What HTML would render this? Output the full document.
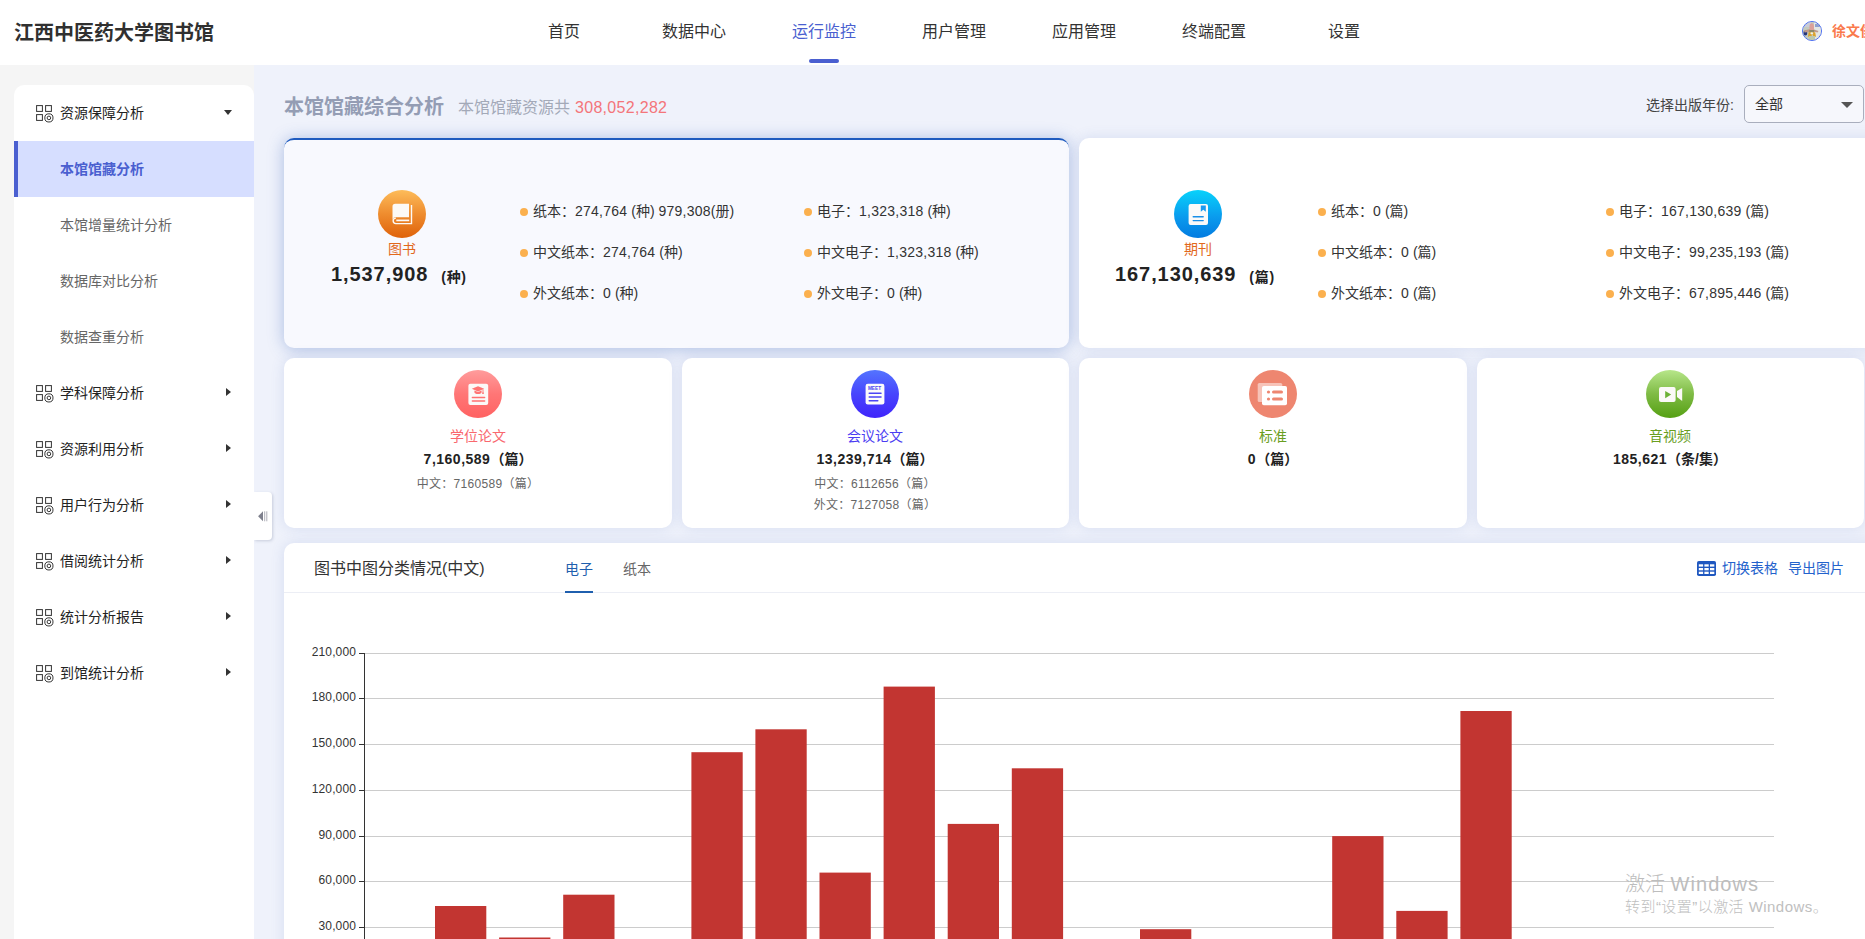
<!DOCTYPE html>
<html lang="zh-CN">
<head>
<meta charset="utf-8">
<title>江西中医药大学图书馆</title>
<style>
*{box-sizing:border-box;margin:0;padding:0}
html,body{width:1865px;height:939px;overflow:hidden;background:#eff2fb}
body{font-family:"Liberation Sans","Noto Sans CJK SC",sans-serif;font-size:14px;color:#333;position:relative}
.abs{position:absolute}
#hdr{position:absolute;left:0;top:0;width:1865px;height:65px;background:#fff}
#logo{position:absolute;left:14px;top:18px;font-size:20px;font-weight:bold;color:#303030;line-height:30px;white-space:nowrap}
.nav{position:absolute;top:17px;width:130px;text-align:center;font-size:16px;line-height:30px;color:#333;white-space:nowrap}
.nav.on{color:#4a5fd0}
#navbar{position:absolute;left:809px;top:59px;width:30px;height:4px;border-radius:2px;background:#4a5fd0}
#avatar{position:absolute;left:1802px;top:21px;width:20px;height:20px;border-radius:50%;border:1px solid #4a6df5;overflow:hidden;background:#c5cbc2}
#uname{position:absolute;left:1832px;top:19px;font-size:14px;font-weight:bold;color:#fa7a4c;line-height:24px;white-space:nowrap}
#sidebg{position:absolute;left:0;top:65px;width:254px;height:874px;background:#f5f5f5}
#side{position:absolute;left:14px;top:85px;width:240px;height:900px;background:#fff;border-radius:10px 10px 0 0}
.mi{position:absolute;left:0;width:240px;height:56px;line-height:56px;font-size:14px;color:#222;white-space:nowrap}
.mi .t{position:absolute;left:46px;top:0}
.mi svg.ic{position:absolute;left:22px;top:19.500px}
.mi .ar{position:absolute;left:212px;top:23px;width:0;height:0;border-left:5px solid #333;border-top:4.5px solid transparent;border-bottom:4.5px solid transparent}
.mi .ad{position:absolute;left:209.500px;top:25px;width:0;height:0;border-top:5px solid #333;border-left:4.5px solid transparent;border-right:4.5px solid transparent}
.sub{color:#666}
.sub .t{left:46px}
.mi.act{background:#d6deff;border-left:4px solid #4a5fd0;color:#4a5fd0;font-weight:bold}
.mi.act .t{left:42px}
#handle{position:absolute;left:254px;top:491.500px;width:18px;height:48.500px;background:#fff;border-radius:0 4px 4px 0;box-shadow:1px 1px 3px rgba(110,120,150,.3);clip-path:inset(-6px -6px -6px 0)}

#ttl{position:absolute;left:284px;top:92px;font-size:20px;font-weight:bold;color:#949db4;line-height:30px;white-space:nowrap}
#sub{position:absolute;left:458px;top:95px;font-size:16px;color:#a3a9b8;line-height:26px;white-space:nowrap}
#sub b{font-weight:normal;color:#f4757a;margin-left:5px;letter-spacing:.3px}
#sellab{position:absolute;left:1646px;top:93px;font-size:14px;color:#444;line-height:24px;white-space:nowrap}
#sel{position:absolute;left:1744px;top:85px;width:120px;height:38px;border:1px solid #a9aebd;border-radius:5px;background:#f6f7fc;font-size:14px;line-height:36px;padding-left:10px;color:#333}
#sel i{position:absolute;left:96px;top:16px;width:0;height:0;border-top:6px solid #555;border-left:6px solid transparent;border-right:6px solid transparent}
.big{position:absolute;top:138px;width:785px;height:210px;border-radius:10px;background:#fff;box-shadow:0 0 14px rgba(70,100,180,.15)}
.big.on{background:#f8f9fe;border-top:2px solid #1f5bbf;box-shadow:0 1px 16px rgba(50,95,185,.36)}
.circ{position:absolute;width:48px;height:48px;border-radius:50%}
.lab{position:absolute;font-size:14px;line-height:20px;text-align:center;white-space:nowrap}
.num{position:absolute;font-weight:bold;color:#222;white-space:nowrap;text-align:center}
.row{position:absolute;font-size:14px;line-height:20px;color:#333;white-space:nowrap;padding-left:13px}
.row:before{content:"";position:absolute;left:0;top:7px;width:8px;height:8px;border-radius:50%;background:#fbb04e}
.sm{position:absolute;top:358px;width:387.5px;height:170px;border-radius:10px;background:#fff;box-shadow:0 0 14px rgba(70,100,180,.15)}
.sm .circ{left:170px;top:12px}
.sm .lab{left:0;width:388px;top:68px}
.sm .num{left:0;width:388px;top:90px;font-size:14px;line-height:22px}
.sm .d{position:absolute;left:0;width:388px;font-size:12px;line-height:18px;color:#666;text-align:center;white-space:nowrap;letter-spacing:.3px}
#chart{position:absolute;left:284px;top:543px;width:1600px;height:420px;background:#fff;border-radius:10px 0 0 0;box-shadow:0 0 14px rgba(70,100,180,.15)}
#chd{position:absolute;left:0;top:0;width:1581px;height:50px;border-bottom:1px solid #eceef5}
#cht{position:absolute;left:30px;top:13px;font-size:16px;line-height:26px;color:#333;white-space:nowrap}
.tab{position:absolute;top:14px;font-size:14px;line-height:24px;white-space:nowrap;color:#666}
.tab.on{color:#1f5fae}
#tabbar{position:absolute;left:281px;top:48px;width:28px;height:2px;background:#1f5fae}
.lnk{position:absolute;top:13px;font-size:14px;line-height:24px;color:#2462cc;white-space:nowrap}
#wm1{position:absolute;left:1625px;top:870px;font-size:20px;line-height:28px;color:#bdbdbd;white-space:nowrap;font-weight:300}
#wm2{position:absolute;left:1625px;top:896px;font-size:15px;line-height:22px;color:#c0c0c0;white-space:nowrap;font-weight:300;letter-spacing:.45px}
.n{letter-spacing:.25px}
.big .nn{letter-spacing:.92px}
.sm .nn{letter-spacing:.5px}
.big>*{margin-top:1px}
.nu{position:relative;top:1px;letter-spacing:.7px}
</style>
</head>
<body>
<div id="hdr">
  <div id="logo">江西中医药大学图书馆</div>
  <div class="nav" style="left:499px">首页</div>
  <div class="nav" style="left:629px">数据中心</div>
  <div class="nav on" style="left:759px">运行监控</div>
  <div class="nav" style="left:889px">用户管理</div>
  <div class="nav" style="left:1019px">应用管理</div>
  <div class="nav" style="left:1149px">终端配置</div>
  <div class="nav" style="left:1279px">设置</div>
  <div id="navbar"></div>
  <div id="avatar"><svg width="18" height="18" viewBox="0 0 18 18"><defs><filter id="bl" x="-20%" y="-20%" width="140%" height="140%"><feGaussianBlur stdDeviation=".7"/></filter></defs><g filter="url(#bl)"><rect width="18" height="18" fill="#c3cabf"/><rect x="11" y="0" width="7" height="18" fill="#e4e7e4"/><rect x="0" y="0" width="8" height="5" fill="#c8cbd8"/><rect x="12" y="2" width="5" height="3" fill="#8fa0d0"/><ellipse cx="2.300" cy="11" rx="2" ry="2.600" fill="#26357c"/><path d="M1 8.500L7 7l4 .5 4.500 1.500-1 1.500-4-1-4 .5-5 .5z" fill="#c09a8c"/><ellipse cx="8.700" cy="5.500" rx="2.300" ry="4.200" fill="#dba09a"/><rect x="6.300" y="8" width="5" height="2.400" fill="#8c8a6a"/><path d="M5.600 10.200h6.600l.8 4.500h-2.600l-1-3-1.200 3H5z" fill="#dda32c"/><ellipse cx="8.800" cy="11.300" rx="1.400" ry="1.100" fill="#eef3ea"/><rect x="6" y="14" width="6" height="4" fill="#bcc8ae"/></g></svg></div>
  <div id="uname">徐文俊</div>
</div>
<div id="sidebg"></div>
<div id="side">
<div class="mi" style="top:0px"><svg class="ic" width="18" height="18" viewBox="0 0 18 18" fill="none" stroke="#333" stroke-width="1"><rect x="0.6" y="0.6" width="5.8" height="5.8"/><rect x="9.6" y="0.6" width="5.8" height="5.8"/><rect x="0.6" y="9.6" width="5.8" height="5.8"/><circle cx="12.9" cy="12.9" r="4.1"/><circle cx="12.9" cy="12.9" r="1.8"/></svg><span class="t">资源保障分析</span><i class="ad"></i></div>
<div class="mi act" style="top:56px"><span class="t">本馆馆藏分析</span></div>
<div class="mi sub" style="top:112px"><span class="t">本馆增量统计分析</span></div>
<div class="mi sub" style="top:168px"><span class="t">数据库对比分析</span></div>
<div class="mi sub" style="top:224px"><span class="t">数据查重分析</span></div>
<div class="mi" style="top:280px"><svg class="ic" width="18" height="18" viewBox="0 0 18 18" fill="none" stroke="#333" stroke-width="1"><rect x="0.6" y="0.6" width="5.8" height="5.8"/><rect x="9.6" y="0.6" width="5.8" height="5.8"/><rect x="0.6" y="9.6" width="5.8" height="5.8"/><circle cx="12.9" cy="12.9" r="4.1"/><circle cx="12.9" cy="12.9" r="1.8"/></svg><span class="t">学科保障分析</span><i class="ar"></i></div>
<div class="mi" style="top:336px"><svg class="ic" width="18" height="18" viewBox="0 0 18 18" fill="none" stroke="#333" stroke-width="1"><rect x="0.6" y="0.6" width="5.8" height="5.8"/><rect x="9.6" y="0.6" width="5.8" height="5.8"/><rect x="0.6" y="9.6" width="5.8" height="5.8"/><circle cx="12.9" cy="12.9" r="4.1"/><circle cx="12.9" cy="12.9" r="1.8"/></svg><span class="t">资源利用分析</span><i class="ar"></i></div>
<div class="mi" style="top:392px"><svg class="ic" width="18" height="18" viewBox="0 0 18 18" fill="none" stroke="#333" stroke-width="1"><rect x="0.6" y="0.6" width="5.8" height="5.8"/><rect x="9.6" y="0.6" width="5.8" height="5.8"/><rect x="0.6" y="9.6" width="5.8" height="5.8"/><circle cx="12.9" cy="12.9" r="4.1"/><circle cx="12.9" cy="12.9" r="1.8"/></svg><span class="t">用户行为分析</span><i class="ar"></i></div>
<div class="mi" style="top:448px"><svg class="ic" width="18" height="18" viewBox="0 0 18 18" fill="none" stroke="#333" stroke-width="1"><rect x="0.6" y="0.6" width="5.8" height="5.8"/><rect x="9.6" y="0.6" width="5.8" height="5.8"/><rect x="0.6" y="9.6" width="5.8" height="5.8"/><circle cx="12.9" cy="12.9" r="4.1"/><circle cx="12.9" cy="12.9" r="1.8"/></svg><span class="t">借阅统计分析</span><i class="ar"></i></div>
<div class="mi" style="top:504px"><svg class="ic" width="18" height="18" viewBox="0 0 18 18" fill="none" stroke="#333" stroke-width="1"><rect x="0.6" y="0.6" width="5.8" height="5.8"/><rect x="9.6" y="0.6" width="5.8" height="5.8"/><rect x="0.6" y="9.6" width="5.8" height="5.8"/><circle cx="12.9" cy="12.9" r="4.1"/><circle cx="12.9" cy="12.9" r="1.8"/></svg><span class="t">统计分析报告</span><i class="ar"></i></div>
<div class="mi" style="top:560px"><svg class="ic" width="18" height="18" viewBox="0 0 18 18" fill="none" stroke="#333" stroke-width="1"><rect x="0.6" y="0.6" width="5.8" height="5.8"/><rect x="9.6" y="0.6" width="5.8" height="5.8"/><rect x="0.6" y="9.6" width="5.8" height="5.8"/><circle cx="12.9" cy="12.9" r="4.1"/><circle cx="12.9" cy="12.9" r="1.8"/></svg><span class="t">到馆统计分析</span><i class="ar"></i></div>
</div>
<div id="handle"><svg width="18" height="49" viewBox="0 0 18 49"><path d="M4.100 24.300 L9 19.300 V29.300 Z" fill="#7e808d"/><path d="M10.700 19.300V29.300M12.800 19.300V29.300" stroke="#9a9ba4" stroke-width=".8"/></svg></div>

<div id="ttl">本馆馆藏综合分析</div>
<div id="sub">本馆馆藏资源共<b>308,052,282</b></div>
<div id="sellab">选择出版年份:</div>
<div id="sel">全部<i></i></div>

<div class="big on" style="left:284px">
<div class="circ" style="left:94px;top:49px;background:linear-gradient(180deg,#fdbc5a 0%,#ef8e30 48%,#df620a 100%)"><svg width="48" height="48" viewBox="0 0 48 48"><path d="M17.200 13.800H31V27.300H17.700A3.200 3.200 0 0 0 14.500 30.200V16.500A2.700 2.700 0 0 1 17.200 13.800Z" fill="#fcf9f6"/><path d="M33.500 15V33.600H17.900A2.750 2.750 0 0 1 17.900 28.100" fill="none" stroke="#fcf9f6" stroke-width="1.400"/><path d="M18.300 30.400H31.200" stroke="#fcf9f6" stroke-width="1.700"/></svg></div>
<div class="lab" style="left:72px;width:92px;top:98px;color:#e2681c">图书</div>
<div class="num" id="n1" style="left:47px;top:119px;font-size:20px;line-height:28px"><span class="nn">1,537,908</span><span class="nu" style="font-size:14px;margin-left:13px">(种)</span></div>
<div class="row" style="left:236px;top:60px">纸本：<span class="n">274,764</span> (种) <span class="n">979,308</span>(册)</div>
<div class="row" style="left:236px;top:101px">中文纸本：<span class="n">274,764</span> (种)</div>
<div class="row" style="left:236px;top:142px">外文纸本：<span class="n">0</span> (种)</div>
<div class="row" style="left:520px;top:60px">电子：<span class="n">1,323,318</span> (种)</div>
<div class="row" style="left:520px;top:101px">中文电子：<span class="n">1,323,318</span> (种)</div>
<div class="row" style="left:520px;top:142px">外文电子：<span class="n">0</span> (种)</div>
</div>
<div class="big" style="left:1079px;width:810px">
<div class="circ" style="left:95px;top:51px;background:linear-gradient(180deg,#08d2fb 0%,#0a9cee 55%,#037be0 100%)"><svg width="48" height="48" viewBox="0 0 48 48"><rect x="14.6" y="14" width="19.4" height="21" rx="2" fill="#fbfaf9"/><path d="M26.8 15.5h5v6.2l-2.5-2-2.5 2z" fill="#1a9af0"/><path d="M19.2 26.8h10M19.2 30.6h10" stroke="#1a8fe8" stroke-width="1.4" stroke-linecap="round"/></svg></div>
<div class="lab" style="left:73px;width:92px;top:100px;color:#e2681c">期刊</div>
<div class="num" id="n2" style="left:36px;top:121px;font-size:20px;line-height:28px"><span class="nn">167,130,639</span><span class="nu" style="font-size:14px;margin-left:13px">(篇)</span></div>
<div class="row" style="left:239px;top:62px">纸本：<span class="n">0</span> (篇)</div>
<div class="row" style="left:239px;top:103px">中文纸本：<span class="n">0</span> (篇)</div>
<div class="row" style="left:239px;top:144px">外文纸本：<span class="n">0</span> (篇)</div>
<div class="row" style="left:527px;top:62px">电子：<span class="n">167,130,639</span> (篇)</div>
<div class="row" style="left:527px;top:103px">中文电子：<span class="n">99,235,193</span> (篇)</div>
<div class="row" style="left:527px;top:144px">外文电子：<span class="n">67,895,446</span> (篇)</div>
</div>

<div class="sm" style="left:284px"><div class="circ" style="left:170px;background:linear-gradient(180deg,#ff9c9c 0%,#ff7676 50%,#ff6262 100%)"><svg width="48" height="48" viewBox="0 0 48 48"><rect x="14.4" y="13.8" width="19.8" height="21.2" rx="2" fill="#fbf9f8"/><path d="M24 16.2l6.2 2.6-6.2 2.6-6.2-2.6z" fill="#ff7373"/><path d="M20.4 20.6v1.6c0 1 1.6 1.8 3.6 1.8s3.6-.8 3.6-1.800v-1.600l-3.600 1.500z" fill="#ff7373"/><path d="M29 19.300v3.600" stroke="#ff7373" stroke-width=".9"/><circle cx="29" cy="23.200" r=".9" fill="#ff7373"/><path d="M18.400 27.400h12.200M18.400 31h12.200" stroke="#ff7070" stroke-width="1.500" stroke-linecap="round"/></svg></div><div class="lab" style="color:#f9686e;left:0px">学位论文</div><div class="num" style="left:0px"><span class="nn">7,160,589</span>（篇）</div><div class="d" style="top:117px;left:0px">中文：7160589（篇）</div></div>
<div class="sm" style="left:681.5px"><div class="circ" style="left:169.5px;background:linear-gradient(180deg,#5474ff 0%,#4845fd 50%,#3f24fb 100%)"><svg width="48" height="48" viewBox="0 0 48 48"><rect x="14.600" y="13.800" width="18.800" height="20.600" rx="2.200" fill="#fcfbfb"/><text x="16.900" y="20.200" font-family="Liberation Sans,sans-serif" font-size="4.600" font-weight="bold" fill="#4a48f0" textLength="13.200" lengthAdjust="spacingAndGlyphs">MEET</text><path d="M18.200 23.300h11.800M18.200 27h11.800M18.200 30.800h8.600" stroke="#4b45f5" stroke-width="1.500" stroke-linecap="round"/></svg></div><div class="lab" style="color:#4b3cf2;left:-0.5px">会议论文</div><div class="num" style="left:-0.5px"><span class="nn">13,239,714</span>（篇）</div><div class="d" style="top:117px;left:-0.5px">中文：6112656（篇）</div><div class="d" style="top:138px;left:-0.5px">外文：7127058（篇）</div></div>
<div class="sm" style="left:1079px"><div class="circ" style="left:170px;background:#ee8670"><svg width="48" height="48" viewBox="0 0 48 48"><rect x="8.700" y="13" width="24.600" height="19" rx="1.600" fill="#fff" fill-opacity=".5"/><rect x="13" y="16" width="25" height="19.200" rx="1.800" fill="#fff"/><circle cx="19.500" cy="22" r="1.600" fill="#ee8670"/><circle cx="19.500" cy="29" r="1.600" fill="#ee8670"/><path d="M24.500 22h8M24.500 29h8" stroke="#ee8670" stroke-width="3" stroke-linecap="round"/></svg></div><div class="lab" style="color:#6a9e1f;left:0px">标准</div><div class="num" style="left:0px"><span class="nn">0</span>（篇）</div></div>
<div class="sm" style="left:1476.5px"><div class="circ" style="left:169.5px;background:linear-gradient(180deg,#b7e68a 0%,#7fbb45 50%,#55a013 100%)"><svg width="48" height="48" viewBox="0 0 48 48"><rect x="13" y="17" width="16.600" height="15" rx="2" fill="#fbf9f8"/><path d="M31 21.100L36.200 17.900V31L31 27.100Z" fill="#fbf9f8"/><path d="M19.200 21l6 3.600-6 3.600z" fill="#6cb136"/></svg></div><div class="lab" style="color:#6a9e1f;left:-0.5px">音视频</div><div class="num" style="left:-0.5px"><span class="nn">185,621</span>（条/集）</div></div>
<div id="chart">
<div id="chd"><div id="cht">图书中图分类情况(中文)</div>
<div class="tab on" style="left:281px">电子</div><div class="tab" style="left:339px">纸本</div><div id="tabbar"></div>
<svg style="position:absolute;left:1413px;top:18px" width="19" height="15" viewBox="0 0 19 15"><rect width="19" height="15" rx="1.800" fill="#2058c0"/><g fill="#fff"><rect x="1.800" y="3.300" width="4.300" height="2.300"/><rect x="7.400" y="3.300" width="4.300" height="2.300"/><rect x="13" y="3.300" width="4.300" height="2.300"/><rect x="1.800" y="7" width="4.300" height="2.300"/><rect x="7.400" y="7" width="4.300" height="2.300"/><rect x="13" y="7" width="4.300" height="2.300"/><rect x="1.800" y="10.700" width="4.300" height="2.300"/><rect x="7.400" y="10.700" width="4.300" height="2.300"/><rect x="13" y="10.700" width="4.300" height="2.300"/></g></svg><div class="lnk" style="left:1438px">切换表格</div><div class="lnk" style="left:1504px">导出图片</div></div>
<svg id="csvg" style="position:absolute;left:0;top:50px" width="1581" height="346" viewBox="284 593 1581 346"><path d="M364.500 653.5H1774" stroke="#ccc" stroke-width="1"/><path d="M359 653.5H364.500" stroke="#333" stroke-width="1"/><text x="356" y="656" text-anchor="end" font-size="12" fill="#333" letter-spacing=".12" font-family="Liberation Sans,sans-serif">210,000</text><path d="M364.500 698.5H1774" stroke="#ccc" stroke-width="1"/><path d="M359 698.5H364.500" stroke="#333" stroke-width="1"/><text x="356" y="701" text-anchor="end" font-size="12" fill="#333" letter-spacing=".12" font-family="Liberation Sans,sans-serif">180,000</text><path d="M364.500 744.5H1774" stroke="#ccc" stroke-width="1"/><path d="M359 744.5H364.500" stroke="#333" stroke-width="1"/><text x="356" y="747" text-anchor="end" font-size="12" fill="#333" letter-spacing=".12" font-family="Liberation Sans,sans-serif">150,000</text><path d="M364.500 790.5H1774" stroke="#ccc" stroke-width="1"/><path d="M359 790.5H364.500" stroke="#333" stroke-width="1"/><text x="356" y="793" text-anchor="end" font-size="12" fill="#333" letter-spacing=".12" font-family="Liberation Sans,sans-serif">120,000</text><path d="M364.500 836.5H1774" stroke="#ccc" stroke-width="1"/><path d="M359 836.5H364.500" stroke="#333" stroke-width="1"/><text x="356" y="839" text-anchor="end" font-size="12" fill="#333" letter-spacing=".12" font-family="Liberation Sans,sans-serif">90,000</text><path d="M364.500 881.5H1774" stroke="#ccc" stroke-width="1"/><path d="M359 881.5H364.500" stroke="#333" stroke-width="1"/><text x="356" y="884" text-anchor="end" font-size="12" fill="#333" letter-spacing=".12" font-family="Liberation Sans,sans-serif">60,000</text><path d="M364.500 927.5H1774" stroke="#ccc" stroke-width="1"/><path d="M359 927.5H364.500" stroke="#333" stroke-width="1"/><text x="356" y="930" text-anchor="end" font-size="12" fill="#333" letter-spacing=".12" font-family="Liberation Sans,sans-serif">30,000</text><path d="M364.500 653V939" stroke="#333" stroke-width="1"/><rect x="435.0" y="906" width="51.300" height="35" fill="#c23531"/><rect x="499.1" y="937.5" width="51.300" height="3.5" fill="#c23531"/><rect x="563.2" y="894.7" width="51.300" height="46.299999999999955" fill="#c23531"/><rect x="691.4" y="752.2" width="51.300" height="188.79999999999995" fill="#c23531"/><rect x="755.4" y="729.3" width="51.300" height="211.70000000000005" fill="#c23531"/><rect x="819.5" y="872.6" width="51.300" height="68.39999999999998" fill="#c23531"/><rect x="883.6" y="686.6" width="51.300" height="254.39999999999998" fill="#c23531"/><rect x="947.7" y="823.9" width="51.300" height="117.10000000000002" fill="#c23531"/><rect x="1011.8" y="768.3" width="51.300" height="172.70000000000005" fill="#c23531"/><rect x="1140.0" y="929.2" width="51.300" height="11.799999999999955" fill="#c23531"/><rect x="1332.2" y="836.1" width="51.300" height="104.89999999999998" fill="#c23531"/><rect x="1396.3" y="910.9" width="51.300" height="30.100000000000023" fill="#c23531"/><rect x="1460.4" y="711" width="51.300" height="230" fill="#c23531"/></svg>
</div>
<div id="wm1">激活 <span style="letter-spacing:1.050px">Windows</span></div>
<div id="wm2">转到“设置”以激活 Windows。</div>

</body>
</html>
